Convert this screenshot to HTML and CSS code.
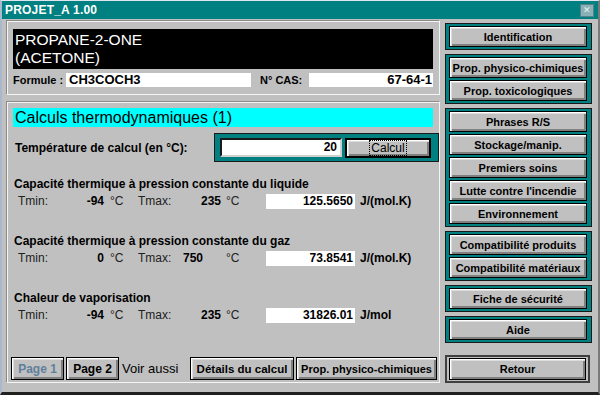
FILE: index.html
```html
<!DOCTYPE html>
<html lang="fr">
<head>
<meta charset="UTF-8" />
<title>PROJET_A 1.00</title>
<link rel="stylesheet" href="styles.css">
</head>
<body>

<div class="window">
  <div class="titlebar">
    <span>PROJET_A 1.00</span>
    <span class="close">&#x2715;</span>
  </div>

  <div class="main">
    <div class="left">

      <div class="panel ident">
        <div class="name">PROPANE-2-ONE<br/>(ACETONE)</div>
        <div class="formula-row">
          <label class="lbl">Formule :</label>
          <div class="field formula">CH3COCH3</div>
          <label class="lbl cas-lbl">N° CAS:</label>
          <div class="field cas">67-64-1</div>
        </div>
      </div>

      <div class="panel calc">
        <div class="heading">Calculs thermodynamiques (1)</div>

        <div class="temp-row">
          <span class="temp-lbl">Température de calcul (en °C):</span>
          <div class="temp-box">
            <div class="temp-input">20</div>
            <button class="btn btn-default"><span class="focus">Calcul</span></button>
          </div>
        </div>

        <div class="section">
          <div class="sec-title">Capacité thermique à pression constante du liquide</div>
          <div class="range">
            <span>Tmin:</span><b class="tmin">-94</b><span class="deg">°C</span>
            <span>Tmax:</span><b class="tmax">235</b><span class="deg deg2">°C</span>
            <div class="result">125.5650</div><span class="unit">J/(mol.K)</span>
          </div>
        </div>

        <div class="section">
          <div class="sec-title">Capacité thermique à pression constante du gaz</div>
          <div class="range">
            <span>Tmin:</span><b class="tmin">0</b><span class="deg">°C</span>
            <span>Tmax:</span><b class="tmax shift">750</b><span class="deg deg2">°C</span>
            <div class="result">73.8541</div><span class="unit">J/(mol.K)</span>
          </div>
        </div>

        <div class="section">
          <div class="sec-title">Chaleur de vaporisation</div>
          <div class="range">
            <span>Tmin:</span><b class="tmin">-94</b><span class="deg">°C</span>
            <span>Tmax:</span><b class="tmax">235</b><span class="deg deg2">°C</span>
            <div class="result">31826.01</div><span class="unit">J/mol</span>
          </div>
        </div>

        <div class="pager">
          <button class="btn page disabled">Page 1</button>
          <button class="btn page">Page 2</button>
          <span class="see">Voir aussi</span>
          <button class="btn details">Détails du calcul</button>
          <button class="btn physico">Prop. physico-chimiques</button>
        </div>
      </div>

    </div>

    <div class="right">
      <div class="group">
        <button class="btn">Identification</button>
      </div>
      <div class="group">
        <button class="btn">Prop. physico-chimiques</button>
        <button class="btn">Prop. toxicologiques</button>
      </div>
      <div class="group">
        <button class="btn">Phrases R/S</button>
        <button class="btn">Stockage/manip.</button>
        <button class="btn">Premiers soins</button>
        <button class="btn">Lutte contre l'incendie</button>
        <button class="btn">Environnement</button>
      </div>
      <div class="group">
        <button class="btn">Compatibilité produits</button>
        <button class="btn">Compatibilité matériaux</button>
      </div>
      <div class="group">
        <button class="btn">Fiche de sécurité</button>
      </div>
      <div class="group">
        <button class="btn">Aide</button>
      </div>
      <div class="retour">
        <button class="btn">Retour</button>
      </div>
    </div>
  </div>
</div>

</body>
</html>
```

FILE: styles.css
```css
body {
  margin: 0;
  font-family: 'Liberation Sans', Arial, sans-serif;
  background: #000;
}
.window {
  width: 600px;
  height: 395px;
  box-sizing: border-box;
  background: #c0c0c0;
  border-top: 1px solid #dfe6ee;
  border-left: 2px solid #a9b8cc;
  border-right: 2px solid #7a7a7a;
  border-bottom: 3px solid #202020;
  display: flex;
  flex-direction: column;
}
.titlebar {
  height: 18px;
  background: #008080;
  color: white;
  font-size: 12px;
  font-weight: bold;
  display: flex;
  align-items: center;
  justify-content: space-between;
  padding: 0 4px 0 3px;
  letter-spacing: 0.2px;
}
.close {
  width: 12px;
  height: 11px;
  background: #8ab0b8;
  border: 1px solid #5a8088;
  color: #e8f0f0;
  font-size: 9px;
  line-height: 11px;
  text-align: center;
  font-weight: normal;
}
.main {
  display: flex;
  gap: 5px;
  padding: 2px 6px 0 5px;
  flex: 1;
}
.left {
  width: 433px;
  display: flex;
  flex-direction: column;
  gap: 7px;
}
.panel {
  box-sizing: border-box;
  border: 1px solid #f4f4f4;
  box-shadow: -1px -1px 0 #8a8a8a;
}
.ident {
  height: 74px;
  padding: 7px 6px 0 5px;
}
.name {
  background: #000;
  color: #fff;
  height: 40px;
  box-sizing: border-box;
  font-size: 15.5px;
  line-height: 18px;
  padding: 2px 2px;
}
.formula-row {
  display: flex;
  align-items: center;
  margin-top: 4px;
  height: 14px;
}
.lbl {
  font-size: 11px;
  font-weight: bold;
  width: 53px;
}
.cas-lbl {
  margin-left: 9px;
  width: 49px;
}
.field {
  background: #fff;
  height: 14px;
  line-height: 14px;
  font-size: 13px;
  font-weight: bold;
  padding: 0 3px;
  box-sizing: border-box;
}
.formula {
  width: 185px;
}
.cas {
  width: 124px;
  text-align: right;
  padding-right: 1px;
}
.calc {
  height: 281px;
  padding: 5px 6px 2px 5px;
  display: flex;
  flex-direction: column;
}
.heading {
  background: #00ffff;
  height: 19px;
  line-height: 19px;
  font-size: 16px;
  padding-left: 2px;
}
.temp-row {
  display: flex;
  align-items: center;
  margin-top: 6px;
  margin-right: -6px;
}
.temp-lbl {
  font-size: 12px;
  font-weight: bold;
  padding-left: 2px;
  width: 199px;
}
.temp-box {
  flex: 1;
  height: 29px;
  box-sizing: border-box;
  background: #008080;
  border: 1px solid #1a1a1a;
  display: flex;
  align-items: center;
  padding: 0 6px 0 5px;
  gap: 3px;
}
.temp-input {
  width: 122px;
  height: 19px;
  box-sizing: border-box;
  background: #fff;
  border: 2px solid #1a1a1a;
  border-right-color: #d0d0d0;
  border-bottom-color: #d0d0d0;
  font-size: 12px;
  font-weight: bold;
  text-align: right;
  line-height: 15px;
  padding-right: 3px;
}
.btn {
  display: block;
  box-sizing: border-box;
  height: 21px;
  width: 100%;
  padding: 0;
  background: #c0c0c0;
  border: 1px solid #000;
  box-shadow: inset 1px 1px 0 #fff, inset 2px 2px 0 #dcdcdc, inset -1px -1px 0 #808080, inset -2px -2px 0 #808080;
  font-family: 'Liberation Sans', Arial, sans-serif;
  font-size: 11px;
  font-weight: bold;
  color: #000;
  text-align: center;
  white-space: nowrap;
}
.btn-default {
  width: 86px;
  height: 20px;
  border-width: 2px;
  font-weight: normal;
  font-size: 12px;
}
.focus {
  border: 1px dotted #000;
  padding: 0 1px;
}
.section {
  margin-top: 25px;
}
.temp-row + .section {
  margin-top: 15px;
}
.sec-title {
  font-size: 12px;
  font-weight: bold;
  line-height: 14px;
  padding-left: 1px;
}
.range {
  display: grid;
  grid-template-columns: 62px 24px 34px 42px 41px 45px 89px auto;
  align-items: center;
  height: 16px;
  margin-top: 2px;
  font-size: 12px;
  padding-left: 5px;
}
.range span {
  color: #202020;
}
.tmin {
  text-align: right;
}
.tmax {
  text-align: right;
}
.tmax.shift {
  text-align: left;
  padding-left: 3px;
}
.deg {
  padding-left: 6px;
}
.range .deg2 {
  padding-left: 5px;
}
.result {
  background: #fff;
  height: 15px;
  line-height: 15px;
  text-align: right;
  font-weight: bold;
  padding-right: 2px;
  box-sizing: border-box;
}
.range .unit {
  padding-left: 5px;
  font-weight: bold;
  color: #000;
}
.pager {
  margin-top: auto;
  margin-left: -2px;
  margin-right: -6px;
  display: flex;
  align-items: center;
}
.pager .btn {
  height: 23px;
  font-size: 12px;
  flex-shrink: 0;
}
.page {
  width: 53px;
}
.pager .page + .page {
  margin-left: 2px;
}
.disabled {
  color: #5f7f9c !important;
}
.see {
  font-size: 13px;
  white-space: nowrap;
  width: 65px;
  margin-left: 3px;
  flex-shrink: 0;
}
.pager .details {
  width: 104px;
  margin-left: 3px;
  font-size: 11.5px;
}
.pager .physico {
  width: 141px;
  margin-left: 2px;
  font-size: 11px;
}
.right {
  width: 147px;
  display: flex;
  flex-direction: column;
  gap: 4px;
  padding-top: 2px;
}
.group {
  background: #008080;
  border: 1px solid #1a1a1a;
  padding: 2px 4px 2px 3px;
  display: flex;
  flex-direction: column;
  gap: 2px;
}
.retour {
  margin-top: 8px;
  border: 2px solid #404040;
  padding: 1px 2px;
  margin-right: 2px;
}
.retour .btn {
  height: 22px;
}
```
